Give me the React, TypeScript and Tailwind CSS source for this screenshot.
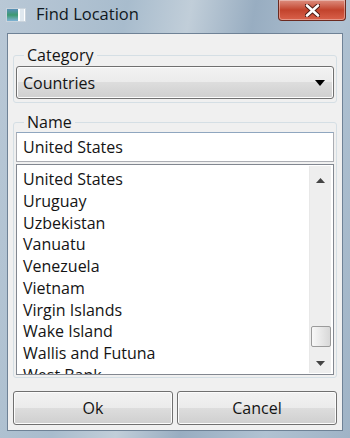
const countries = [
  "United States",
  "Uruguay",
  "Uzbekistan",
  "Vanuatu",
  "Venezuela",
  "Vietnam",
  "Virgin Islands",
  "Wake Island",
  "Wallis and Futuna",
  "West Bank",
];

const font = { fontFamily: '"Open Sans", "Noto Sans", sans-serif' };

function TitleBar() {
  return (
    <div className="relative flex h-[33px] items-start pt-[4px]">
      <div className="ml-[6px] mt-[4px] flex h-[14px] w-[20px] border border-[#c9d3dc] bg-white">
        <div className="h-full w-[11px] bg-gradient-to-b from-[#5a8fb8] via-[#3d9a6f] to-[#7fb1d6]" />
        <div className="ml-[2px] h-full w-[4px] bg-[#dfe8ef]" />
      </div>
      <span className="ml-[10px] text-[16.5px] leading-[20px] text-[#101820]">Find Location</span>
      <div className="absolute right-[4px] top-0 flex h-[21px] w-[68px] items-center justify-center rounded-b-[4px] border border-t-0 border-[#6b2a20] bg-gradient-to-b from-[#dc8d7e] via-[#c2432c] to-[#d9614a] shadow-[inset_0_0_0_1px_rgba(255,255,255,0.35)]">
        <svg width="15" height="13" viewBox="0 0 15 13">
          <path
            d="M2 1.5 L13 11.5 M13 1.5 L2 11.5"
            stroke="#4a1a14"
            strokeWidth="4.5"
            strokeLinecap="round"
          />
          <path
            d="M2 1.5 L13 11.5 M13 1.5 L2 11.5"
            stroke="#ffffff"
            strokeWidth="2.6"
            strokeLinecap="round"
          />
        </svg>
      </div>
    </div>
  );
}

function GroupBox({ label, children, className }: { label: string; children: React.ReactNode; className?: string }) {
  return (
    <fieldset className={"rounded-[3px] border border-[#d5dfe5] px-[2px] pb-[2px] " + (className ?? "")}>
      <legend className="ml-[8px] px-[3px] text-[16px] leading-[18px] text-[#141414]">{label}</legend>
      {children}
    </fieldset>
  );
}

function Button({ label }: { label: string }) {
  return (
    <button className="h-[34px] flex-1 rounded-[3px] border border-[#707070] bg-[linear-gradient(#f2f2f2_0%,#ebebeb_50%,#dddddd_50%,#cfcfcf_100%)] text-[16px] text-[#141414] shadow-[inset_0_0_0_1px_#fcfcfc]">
      {label}
    </button>
  );
}

export default function App() {
  return (
    <div
      className="relative flex h-[438px] w-[350px] flex-col overflow-hidden bg-[linear-gradient(100deg,#b9c8d6_0%,#a8bccd_30%,#c1ced9_45%,#98adc1_60%,#b0c2d2_80%,#9fb3c6_100%)]"
      style={font}
    >
      <TitleBar />
      <div className="mx-[7px] mb-[7px] flex flex-1 flex-col border border-[#6f8296] bg-[#f0f0f0] px-[5px] pt-[12px]">
        <GroupBox label="Category">
          <div className="mb-[1px] mt-[2px] flex h-[33px] items-center justify-between rounded-[3px] border border-[#707070] bg-[linear-gradient(#f2f2f2_0%,#ebebeb_50%,#dddddd_50%,#cfcfcf_100%)] pl-[6px] pr-[8px] shadow-[inset_0_0_0_1px_#fcfcfc]">
            <span className="text-[16px] text-[#141414]">Countries</span>
            <svg width="10" height="6" viewBox="0 0 10 6">
              <path d="M0 0 L10 0 L5 6 Z" fill="#000" />
            </svg>
          </div>
        </GroupBox>
        <GroupBox label="Name" className="mt-[10px]">
          <div className="mt-[1px] flex h-[30px] items-center border border-[#abadb3] border-t-[#8fa6bf] bg-white px-[6px]">
            <span className="text-[16px] text-[#141414]">United States</span>
          </div>
          <div className="mt-[2px] flex h-[211px] overflow-hidden border border-[#828790] bg-white">
            <div className="flex-1 overflow-hidden pl-[6px] pt-[4px]">
              {countries.map((c) => (
                <div key={c} className="h-[21.75px] text-[16px] leading-[21.75px] text-[#141414]">
                  {c}
                </div>
              ))}
            </div>
            <div className="my-[1px] mr-[2px] flex w-[22px] flex-col items-center border-l border-[#e8e8e8] bg-[#eeeeee]">
              <div className="flex h-[22px] items-center justify-center pt-[6px]">
                <svg width="9" height="5" viewBox="0 0 9 5">
                  <path d="M0 5 L4.5 0 L9 5 Z" fill="#444" />
                </svg>
              </div>
              <div className="flex-1" />
              <div className="h-[21px] w-[20px] rounded-[2px] border border-[#9b9b9b] bg-[linear-gradient(90deg,#f8f8f8,#d8d8d8)]" />
              <div className="mt-[4px] flex h-[22px] items-start justify-center pt-[10px]">
                <svg width="9" height="5" viewBox="0 0 9 5">
                  <path d="M0 0 L9 0 L4.5 5 Z" fill="#444" />
                </svg>
              </div>
            </div>
          </div>
        </GroupBox>
        <div className="mt-[13px] flex gap-[4px]">
          <Button label="Ok" />
          <Button label="Cancel" />
        </div>
      </div>
    </div>
  );
}
